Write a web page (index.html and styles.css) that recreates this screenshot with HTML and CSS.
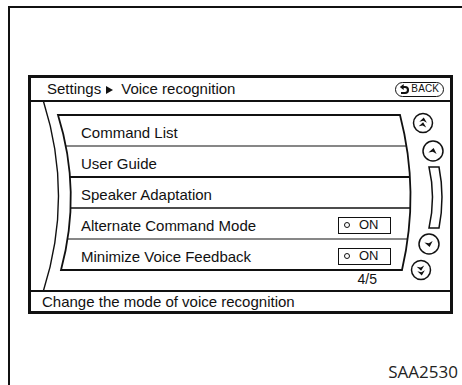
FILE: index.html
```html
<!DOCTYPE html>
<html lang="en">
<head>
    <meta charset="UTF-8">
    <meta name="viewport" content="width=device-width, initial-scale=1.0">
    <title>Settings - Voice recognition</title>
    <link rel="stylesheet" href="styles.css">
</head>
<body>
    <div class="frame">
        <div class="screen">
            <div class="screen-head">
                <span class="crumb">Settings<i class="tri"></i>Voice recognition</span>
                <span class="back">
                    <svg width="11" height="11" viewBox="0 0 10 11">
                        <polygon points="0.3,3 4.2,0 4.2,6" fill="#111"/>
                        <path d="M3.5,3 H5.5 A3,3 0 0 1 5.5,9 H1.5" fill="none" stroke="#111" stroke-width="2.1"/>
                    </svg>BACK
                </span>
            </div>

            <div class="screen-body">
                <svg class="deco" width="419" height="188" viewBox="31 102 419 188">
                    <defs>
                        <clipPath id="panel">
                            <path d="M58,115 L400,115 Q420,192 402,270 L61,270 Q82,192 58,115 Z"/>
                        </clipPath>
                    </defs>
                    <!-- outer curve -->
                    <path d="M43,100 Q74,196 43,292" fill="none" stroke="#111" stroke-width="1.4"/>
                    <!-- list panel -->
                    <g clip-path="url(#panel)" stroke="#111">
                        <line x1="40" y1="146" x2="430" y2="146" stroke-width="1.2"/>
                        <line x1="40" y1="177" x2="430" y2="177" stroke-width="1.8"/>
                        <line x1="40" y1="208" x2="430" y2="208" stroke-width="1.5"/>
                        <line x1="40" y1="239" x2="430" y2="239" stroke-width="1.2"/>
                    </g>
                    <path d="M58,115 L400,115 Q420,192 402,270 L61,270 Q82,192 58,115 Z" fill="none" stroke="#111" stroke-width="1.8"/>

                    <!-- scroll controls -->
                    <g fill="none" stroke="#111" stroke-width="1.5">
                        <circle cx="423" cy="123" r="9.5"/>
                        <circle cx="433" cy="151" r="10"/>
                        <path d="M429,167 L439,167 Q445,197 439,228 L429,228 Q436,197 429,167 Z"/>
                        <circle cx="429" cy="244" r="10"/>
                        <circle cx="421" cy="270" r="9.5"/>
                    </g>
                    <g fill="#111">
                        <path transform="translate(423,123) rotate(8)" d="M0,-5.5 L3.8,-0.8 L0,-2.2 L-3.8,-0.8 Z M0,-0.8 L3.8,3.9 L0,2.5 L-3.8,3.9 Z"/>
                        <path transform="translate(433,151) rotate(12)" d="M0,-3 L4.2,2.3 L0,0.8 L-4.2,2.3 Z"/>
                        <path transform="translate(429,244) rotate(168)" d="M0,-3 L4.2,2.3 L0,0.8 L-4.2,2.3 Z"/>
                        <path transform="translate(421,270) rotate(172)" d="M0,-5.5 L3.8,-0.8 L0,-2.2 L-3.8,-0.8 Z M0,-0.8 L3.8,3.9 L0,2.5 L-3.8,3.9 Z"/>
                    </g>
                </svg>

                <div class="menu">
                    <div class="menu-item">Command List</div>
                    <div class="menu-item">User Guide</div>
                    <div class="menu-item">Speaker Adaptation</div>
                    <div class="menu-item">Alternate Command Mode <span class="toggle"><i class="dot"></i>ON</span></div>
                    <div class="menu-item">Minimize Voice Feedback <span class="toggle"><i class="dot"></i>ON</span></div>
                </div>
                <div class="page-count">4/5</div>
            </div>

            <div class="screen-foot">Change the mode of voice recognition</div>
        </div>
        <div class="fig-code">SAA2530</div>
    </div>
</body>
</html>
```

FILE: styles.css
```css
html, body {
    margin: 0;
    background-color: #ffffff;
    overflow: hidden;
}
body {
    font-family: "Liberation Sans", Arial, sans-serif;
    color: #111;
}
.frame {
    margin: 6px 0 0 8px;
    border-top: 2px solid #111;
    border-left: 2px solid #111;
    padding: 67px 0 0 18px;
    height: 310px;
}
.screen {
    width: 425px;
    height: 239px;
    box-sizing: border-box;
    border: 3px solid #111;
    display: flex;
    flex-direction: column;
}
.screen-head {
    height: 22px;
    border-bottom: 2px solid #111;
    display: flex;
    align-items: center;
    justify-content: space-between;
    padding: 0 6px 0 16px;
    font-size: 15px;
    line-height: 22px;
}
.tri {
    display: inline-block;
    width: 0;
    height: 0;
    border-left: 7px solid #111;
    border-top: 4px solid transparent;
    border-bottom: 4px solid transparent;
    margin: 0 8px 0 5px;
    vertical-align: 0;
}
.back {
    display: flex;
    align-items: center;
    gap: 1px;
    height: 15px;
    box-sizing: border-box;
    padding: 0 4px 0 3px;
    border: 1.5px solid #111;
    border-radius: 8px;
    font-size: 10px;
    line-height: 12px;
    letter-spacing: 0.1px;
}
.screen-body {
    position: relative;
    height: 188px;
}
.deco {
    position: absolute;
    left: 0;
    top: 0;
}
.menu {
    position: relative;
    padding: 14px 0 0 50px;
}
.menu-item {
    width: 310px;
    height: 31px;
    display: flex;
    align-items: center;
    justify-content: space-between;
    font-size: 15px;
    line-height: 31px;
    padding-top: 1px;
    box-sizing: border-box;
}
.toggle {
    display: flex;
    align-items: center;
    width: 53px;
    height: 17px;
    box-sizing: border-box;
    border: 1.5px solid #111;
    font-size: 13px;
    line-height: 14px;
    padding-left: 5px;
    gap: 9px;
}
.dot {
    display: inline-block;
    width: 4px;
    height: 4px;
    border: 1.5px solid #111;
    border-radius: 50%;
}
.page-count {
    position: relative;
    width: 296px;
    padding-left: 50px;
    text-align: right;
    font-size: 14px;
    line-height: 17px;
}
.screen-foot {
    border-top: 2px solid #111;
    height: 19px;
    padding-left: 11px;
    font-size: 15px;
    line-height: 19px;
}
.fig-code {
    width: 430px;
    margin-top: 46px;
    text-align: right;
    font-family: "Open Sans", sans-serif;
    font-size: 17px;
    color: #222;
}
```
